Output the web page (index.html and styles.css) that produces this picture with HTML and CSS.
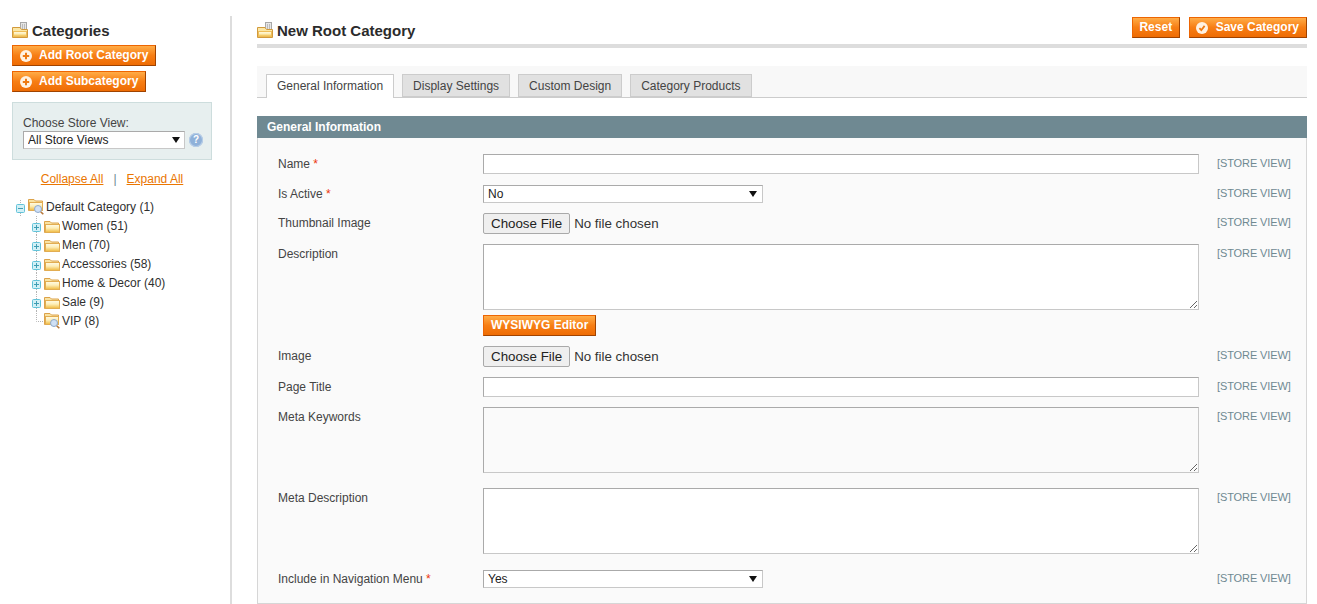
FILE: index.html
```html
<!DOCTYPE html>
<html lang="en">
<head>
    <meta charset="UTF-8">
    <meta name="viewport" content="width=device-width, initial-scale=1.0">
    <title>New Root Category</title>
    <link rel="stylesheet" href="styles.css">
</head>
<body>
    <svg class="icon-defs" width="0" height="0" aria-hidden="true">
        <defs>
            <linearGradient id="folderFill" x1="0" y1="0" x2="0" y2="1">
                <stop offset="0" stop-color="#fffbe6"/>
                <stop offset="0.45" stop-color="#fdeeb8"/>
                <stop offset="1" stop-color="#efb83c"/>
            </linearGradient>
            <symbol id="folder" viewBox="0 0 16 16">
                <path d="M0.5 3.5H6L7.5 5H14.5V14.5H0.5Z" fill="#f8e2a2" stroke="#dca24a"/>
                <rect x="1.5" y="6.5" width="14" height="8" fill="url(#folderFill)" stroke="#e2ad52"/>
            </symbol>
            <symbol id="folder-find" viewBox="0 0 16 16">
                <path d="M0.5 0.5H6L7.5 2H14.5V11.5H0.5Z" fill="#f8e2a2" stroke="#dca24a"/>
                <rect x="1.5" y="3.5" width="13" height="8" fill="url(#folderFill)" stroke="#e2ad52"/>
                <circle cx="10" cy="10" r="3.5" fill="#cfe0f5" stroke="#8ea9cc"/>
                <path d="M12.7 12.7L15.3 15.3" stroke="#b5763a" stroke-width="1.6"/>
            </symbol>
            <symbol id="folder-page" viewBox="0 0 16 16">
                <rect x="8.5" y="0.5" width="6" height="9" fill="#e6e6e6" stroke="#a8a8a8"/>
                <path d="M10.5 2V8M12.5 2V8" stroke="#bbb"/>
                <path d="M0.5 5.5H8L9.5 7.5H15.5V15.5H0.5Z" fill="#fbe7a6" stroke="#d29a3c"/>
                <rect x="1.5" y="9.5" width="13" height="5" fill="url(#folderFill)" stroke="#eebd58"/>
            </symbol>
            <symbol id="tree-minus" viewBox="0 0 12 19">
                <path d="M4.5 3V7M4.5 16V19" stroke="#b5b5b5" stroke-dasharray="1 1"/>
                <rect x="0.5" y="7.5" width="8" height="8" rx="1" fill="#d2f0f6" stroke="#62c3d9"/>
                <path d="M2 11.5H7" stroke="#3f9db3"/>
            </symbol>
            <symbol id="tree-plus" viewBox="0 0 12 19">
                <path d="M4.5 0V7M4.5 16V19" stroke="#b5b5b5" stroke-dasharray="1 1"/>
                <rect x="0.5" y="7.5" width="8" height="8" rx="1" fill="#d2f0f6" stroke="#62c3d9"/>
                <path d="M2 11.5H7M4.5 9V14" stroke="#3f9db3"/>
            </symbol>
            <symbol id="tree-end" viewBox="0 0 12 19">
                <path d="M4.5 0V10.5H12" fill="none" stroke="#b5b5b5" stroke-dasharray="1 1"/>
            </symbol>
            <symbol id="btn-add" viewBox="0 0 12 12">
                <circle cx="6" cy="6" r="6" fill="#fff2e2"/>
                <path d="M6 2.8V9.2M2.8 6H9.2" stroke="#ee7a12" stroke-width="2"/>
            </symbol>
            <symbol id="btn-save" viewBox="0 0 12 12">
                <circle cx="6" cy="6" r="6" fill="#fff2e2"/>
                <path d="M3.4 6.2L5.3 8.2L8.6 3.9" fill="none" stroke="#ee7a12" stroke-width="1.8"/>
            </symbol>
        </defs>
    </svg>

    <div class="page">
        <aside class="side-col">
            <h3 class="side-title">
                <svg class="head-icon"><use href="#folder-page"/></svg>
                Categories
            </h3>
            <div class="side-actions">
                <button class="btn" type="button"><svg class="btn-icon"><use href="#btn-add"/></svg>Add Root Category</button>
                <button class="btn" type="button"><svg class="btn-icon"><use href="#btn-add"/></svg>Add Subcategory</button>
            </div>
            <div class="store-switcher">
                <label class="store-label" for="storeView">Choose Store View:</label>
                <div class="store-row">
                    <div class="select-wrap store-select-wrap">
                        <select id="storeView" class="field-select">
                            <option>All Store Views</option>
                        </select>
                    </div>
                    <span class="help-icon">?</span>
                </div>
            </div>
            <div class="tree-actions">
                <a href="#">Collapse All</a>
                <span class="tree-sep">|</span>
                <a href="#">Expand All</a>
            </div>
            <ul class="tree">
                <li class="tree-root">
                    <svg class="tree-joint"><use href="#tree-minus"/></svg>
                    <svg class="tree-folder"><use href="#folder-find"/></svg>
                    Default Category (1)
                </li>
                <li><svg class="tree-joint"><use href="#tree-plus"/></svg><svg class="tree-folder"><use href="#folder"/></svg>Women (51)</li>
                <li><svg class="tree-joint"><use href="#tree-plus"/></svg><svg class="tree-folder"><use href="#folder"/></svg>Men (70)</li>
                <li><svg class="tree-joint"><use href="#tree-plus"/></svg><svg class="tree-folder"><use href="#folder"/></svg>Accessories (58)</li>
                <li><svg class="tree-joint"><use href="#tree-plus"/></svg><svg class="tree-folder"><use href="#folder"/></svg>Home &amp; Decor (40)</li>
                <li><svg class="tree-joint"><use href="#tree-plus"/></svg><svg class="tree-folder"><use href="#folder"/></svg>Sale (9)</li>
                <li><svg class="tree-joint"><use href="#tree-end"/></svg><svg class="tree-folder"><use href="#folder-find"/></svg>VIP (8)</li>
            </ul>
        </aside>

        <main class="main-col">
            <div class="content-header">
                <h3 class="page-title">
                    <svg class="head-icon"><use href="#folder-page"/></svg>
                    New Root Category
                </h3>
                <div class="form-buttons">
                    <button class="btn btn-reset" type="button">Reset</button>
                    <button class="btn btn-save" type="button"><svg class="btn-icon"><use href="#btn-save"/></svg>Save Category</button>
                </div>
            </div>

            <ul class="tabs">
                <li class="tab active">General Information</li>
                <li class="tab">Display Settings</li>
                <li class="tab">Custom Design</li>
                <li class="tab">Category Products</li>
            </ul>

            <h4 class="section-head">General Information</h4>
            <div class="fieldset">
                <div class="row row-first">
                    <label class="field-label">Name <span class="required">*</span></label>
                    <input class="input-text" type="text">
                    <span class="scope">[Store View]</span>
                </div>
                <div class="row row-select">
                    <label class="field-label">Is Active <span class="required">*</span></label>
                    <div class="select-wrap"><select class="field-select"><option>No</option></select></div>
                    <span class="scope">[Store View]</span>
                </div>
                <div class="row row-file">
                    <label class="field-label">Thumbnail Image</label>
                    <input class="input-file" type="file">
                    <span class="scope">[Store View]</span>
                </div>
                <div class="row">
                    <label class="field-label">Description</label>
                    <div>
                        <textarea class="input-area"></textarea>
                        <button class="btn btn-editor" type="button">WYSIWYG Editor</button>
                    </div>
                    <span class="scope">[Store View]</span>
                </div>
                <div class="row row-file">
                    <label class="field-label">Image</label>
                    <input class="input-file" type="file">
                    <span class="scope">[Store View]</span>
                </div>
                <div class="row">
                    <label class="field-label">Page Title</label>
                    <input class="input-text" type="text">
                    <span class="scope">[Store View]</span>
                </div>
                <div class="row row-meta">
                    <label class="field-label">Meta Keywords</label>
                    <textarea class="input-area input-area-plain"></textarea>
                    <span class="scope">[Store View]</span>
                </div>
                <div class="row row-meta-last">
                    <label class="field-label">Meta Description</label>
                    <textarea class="input-area"></textarea>
                    <span class="scope">[Store View]</span>
                </div>
                <div class="row row-select">
                    <label class="field-label">Include in Navigation Menu <span class="required">*</span></label>
                    <div class="select-wrap"><select class="field-select"><option>Yes</option></select></div>
                    <span class="scope">[Store View]</span>
                </div>
            </div>
        </main>
    </div>
</body>
</html>
```

FILE: styles.css
```css
html, body {
    margin: 0;
    padding: 0;
    height: 100%;
    overflow: hidden;
    background: #fff;
}

body {
    font: 12px/14px "Liberation Sans", Arial, sans-serif;
    color: #444;
}

ul {
    margin: 0;
    padding: 0;
    list-style: none;
}

.icon-defs {
    position: absolute;
}

.page {
    display: flex;
    align-items: flex-start;
    height: 100vh;
}

/* left column */
.side-col {
    box-sizing: border-box;
    flex: none;
    width: 232px;
    height: calc(100vh - 16px);
    margin-top: 16px;
    padding: 6px 0 0 12px;
    border-right: 2px solid #ddd;
}

.side-title,
.page-title {
    display: flex;
    align-items: flex-start;
    gap: 4px;
    margin: 0;
    height: 16px;
    font-size: 15px;
    line-height: 18px;
    font-weight: bold;
    color: #2b2b2b;
}

.head-icon {
    flex: none;
    width: 16px;
    height: 16px;
}

.side-actions {
    display: flex;
    flex-direction: column;
    align-items: flex-start;
    gap: 5px;
    margin-top: 7px;
}

.btn {
    display: inline-flex;
    align-items: center;
    box-sizing: border-box;
    height: 21px;
    padding: 0 7px 2px;
    border: 1px solid;
    border-color: #ed6502 #a04300 #a04300 #ed6502;
    background: linear-gradient(#ffac47, #f77e14 50%, #ee6c04);
    color: #fff;
    font: bold 12px/14px "Liberation Sans", Arial, sans-serif;
    white-space: nowrap;
}

.btn-icon {
    flex: none;
    width: 12px;
    height: 12px;
    margin: 2px 7px 0 0;
}

.btn-reset {
    padding: 0 6.5px 2px;
}

.btn-save {
    padding-left: 6px;
}

.btn-save .btn-icon {
    margin-right: 8px;
}

.store-switcher {
    box-sizing: border-box;
    width: 200px;
    height: 58px;
    margin-top: 10px;
    padding: 13px 0 0 10px;
    border: 1px solid #cddddd;
    background: #e7efef;
}

.store-label {
    display: block;
    color: #444;
}

.store-row {
    display: flex;
    align-items: center;
    gap: 4px;
    margin-top: 1px;
}

.select-wrap {
    position: relative;
    width: 280px;
    height: 18px;
}

.select-wrap::after {
    content: "";
    position: absolute;
    top: 6px;
    right: 6px;
    border-style: solid;
    border-width: 6px 4px 0;
    border-color: #111 transparent transparent;
    pointer-events: none;
}

.store-select-wrap {
    flex: none;
    width: 162px;
}

.store-select-wrap::after {
    right: 5px;
}

.field-select {
    display: block;
    box-sizing: border-box;
    width: 100%;
    height: 18px;
    padding: 0 0 0 4px;
    border: 1px solid;
    border-color: #aaa #c8c8c8 #c8c8c8 #aaa;
    border-radius: 0;
    background: #fff;
    color: #222;
    font: 12px "Liberation Sans", Arial, sans-serif;
    appearance: none;
    -webkit-appearance: none;
}

.help-icon {
    flex: none;
    width: 14px;
    height: 14px;
    border-radius: 50%;
    background: #8fb1d9;
    box-shadow: inset 0 0 0 1px #b9cfe8;
    color: #fff;
    font-size: 10px;
    font-weight: bold;
    line-height: 14px;
    text-align: center;
}

.tree-actions {
    display: flex;
    justify-content: center;
    gap: 10px;
    width: 200px;
    margin-top: 12px;
}

.tree-actions a {
    color: #ea7601;
}

.tree-sep {
    color: #6f8992;
}

.tree {
    margin: 11px 0 0 4px;
    color: #2f2f2f;
}

.tree li {
    display: flex;
    align-items: center;
    height: 19px;
    margin-left: 16px;
}

.tree li.tree-root {
    margin-left: 0;
}

.tree-joint {
    flex: none;
    width: 12px;
    height: 19px;
}

.tree-folder {
    flex: none;
    width: 16px;
    height: 16px;
    margin-right: 2px;
}

/* right column */
.main-col {
    box-sizing: border-box;
    flex: none;
    width: 1050px;
    margin-left: 25px;
}

.content-header {
    display: flex;
    justify-content: space-between;
    align-items: flex-end;
    padding: 17px 0 6px;
    border-bottom: 4px solid #ddd;
}

.form-buttons {
    display: flex;
    gap: 9px;
}

.tabs {
    display: flex;
    align-items: flex-end;
    gap: 8px;
    box-sizing: border-box;
    height: 32px;
    margin-top: 18px;
    padding: 8px 0 0 9px;
    border-bottom: 1px solid #ccc;
    background: #f8f8f8;
}

.tab {
    box-sizing: border-box;
    height: 23px;
    padding: 4px 10px 0;
    border: 1px solid #ccc;
    background: #e1e1e1;
    color: #444;
}

.tab.active {
    height: 24px;
    margin-bottom: -1px;
    border-bottom: 0;
    background: #fff;
}

.section-head {
    box-sizing: border-box;
    height: 22px;
    margin: 18px 0 0;
    padding: 4px 10px 0;
    background: #6f8992;
    color: #fff;
    font-size: 12px;
    line-height: 14px;
    font-weight: bold;
}

.fieldset {
    box-sizing: border-box;
    height: 466px;
    padding: 16px 0 0 20px;
    border: 1px solid #d6d6d6;
    border-top: 0;
    background: #fafafa;
}

.row {
    display: grid;
    grid-template-columns: 205px 716px auto;
    margin-bottom: 10px;
}

.row-first {
    margin-bottom: 11px;
}

.row-meta {
    margin-bottom: 15px;
}

.row-meta-last {
    margin-bottom: 16px;
}

.field-label {
    padding-top: 3px;
}

.scope {
    padding-top: 2px;
}

.row-select .field-label {
    padding-top: 2px;
}

.row-select .scope {
    padding-top: 1px;
}

.required {
    color: #eb340a;
}

.scope {
    padding-left: 18px;
    color: #6f8992;
    font-size: 11px;
    letter-spacing: -0.1px;
    text-transform: uppercase;
}

.input-text,
.input-area {
    display: block;
    box-sizing: border-box;
    width: 716px;
    margin: 0;
    border: 1px solid;
    border-color: #aaa #c8c8c8 #c8c8c8 #aaa;
    background: #fff;
}

.input-text {
    height: 20px;
}

.input-area {
    height: 66px;
    resize: vertical;
}

.input-area-plain {
    background: #fafafa;
}

.input-file {
    width: 300px;
    height: 21px;
    font: 13.33px "Liberation Sans", Arial, sans-serif;
    color: #333;
}

.input-file::file-selector-button {
    height: 21px;
    padding: 1px 7px;
    border: 1px solid #a9a9a9;
    border-radius: 2px;
    background: #efefef;
    color: #222;
}

.btn-editor {
    display: flex;
    margin-top: 5px;
}
```
